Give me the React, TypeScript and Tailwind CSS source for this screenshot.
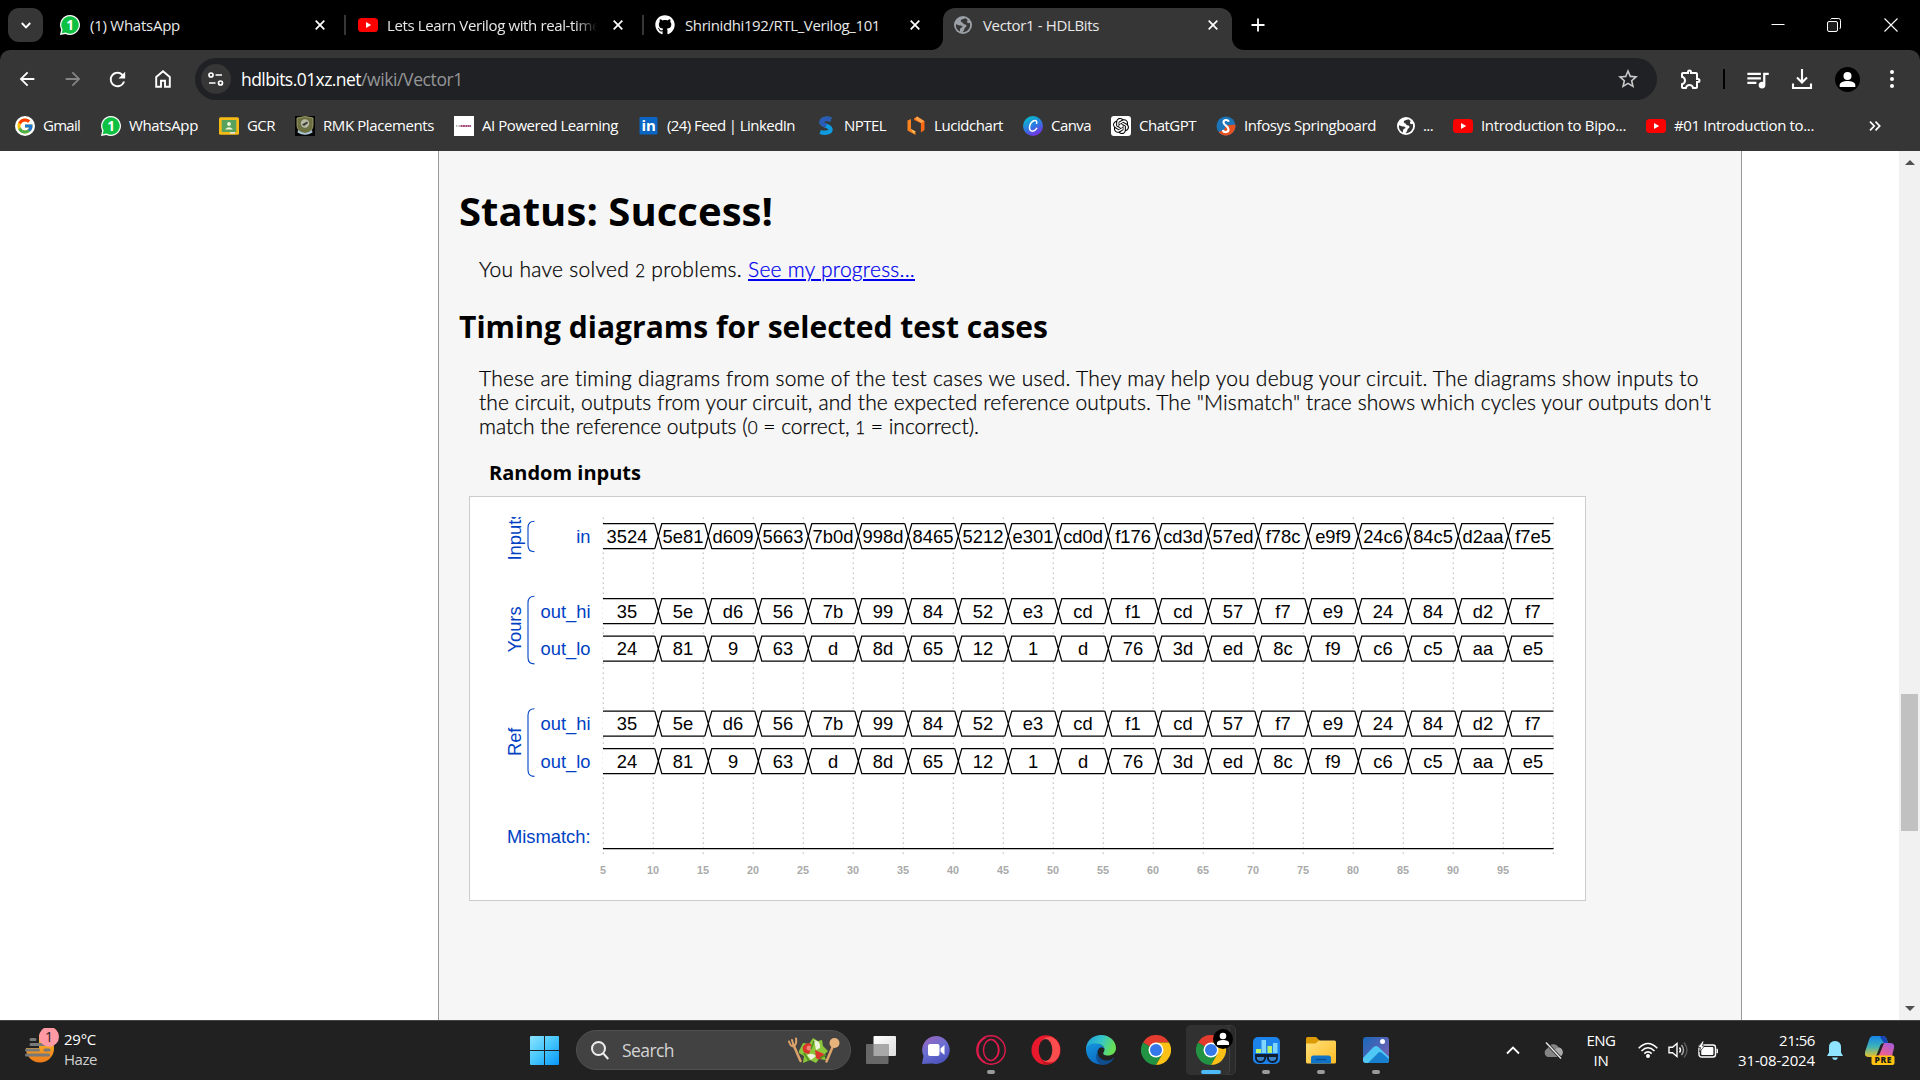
import React, { useLayoutEffect, useRef, useState } from "react";
import { FcGoogle } from "react-icons/fc";
import { FaGithub } from "react-icons/fa";
import { SiOpenai } from "react-icons/si";
import { MdArrowBack, MdArrowForward, MdOutlineExtension, MdQueueMusic, MdRefresh, MdStarOutline } from "react-icons/md";

/* Tracks a single line of text so that it fills a given width. */
function Fit({ w, className = "", children }: { w: number; className?: string; children: React.ReactNode }) {
  const ref = useRef<HTMLSpanElement>(null);
  const [ls, setLs] = useState(0);
  useLayoutEffect(() => {
    const el = ref.current;
    if (!el) return;
    const natural = el.getBoundingClientRect().width;
    const n = (el.textContent || "").length;
    setLs((w - natural) / n);
  }, [w]);
  return (
    <span className={`block shrink-0 whitespace-nowrap ${className}`} style={{ width: w }}>
      <span ref={ref} className="inline-block" style={{ letterSpacing: ls }}>{children}</span>
    </span>
  );
}

const WhatsAppBadge = () => (
  <svg viewBox="0 0 20 20" className="size-5 shrink-0">
    <path d="M10 0A10 10 0 1 1 5.4 18.9L0 20 1.2 14.700A10 10 0 0 1 10 0Z" fill="#fff" />
    <path d="M10 1.300A8.700 8.700 0 1 1 5.600 17.500L1.700 18.300 2.600 14.500A8.700 8.700 0 0 1 10 1.300Z" fill="#0fc143" />
    <text x="10" y="15" textAnchor="middle" fontSize="13.500" fontWeight="700" fill="#fff" fontFamily="Open Sans, sans-serif">1</text>
  </svg>
);

const YouTube = () => (
  <svg viewBox="0 0 20 20" className="size-5 shrink-0">
    <rect y="3" width="20" height="14" rx="3.500" fill="#f00" />
    <path d="M8 7v6l5.200-3Z" fill="#fff" />
  </svg>
);

const Globe = ({ land, sea }: { land: string; sea: string }) => (
  <svg viewBox="0 0 18 18" className="size-[18px] shrink-0">
    <circle cx="9" cy="9" r="9" fill={land} />
    <path d="M11.500 2.200C9.600 3.200 7 2.900 6.800 4.700 6.700 6.600 9 6 9.300 7.500c.3 1.400 2.800.4 3.200 2.100.3 1.800-1.700 1.600-2 3-.2 1.400-1 3.200-2.200 3.500A7.200 7.200 0 0 0 15.400 12c.8-1.500.9-3.800.3-5.200-.9.9-2.400.5-2.600-.7-.2-1 .8-1.500.4-2.300ZM2 8.200c-.5 3.300 1.300 6.100 3.900 7.300.2-1.500-.2-2.300.6-3.300.5-.8 2-.4 2-1.500 0-1-1.600-1.300-2.700-1.300C4.300 9.400 3.500 8.300 2 8.200Z" fill={sea} />
  </svg>
);

const ShieldCrest = () => (
  <svg viewBox="0 0 20 20" className="size-5 shrink-0">
    <rect width="20" height="20" fill="#050505" />
    <path d="M2 2q8-3 16 0v7c0 5-4 8-8 9-4-1-8-4-8-9Z" fill="#6d7040" stroke="#a9a878" strokeWidth=".8" />
    <circle cx="10" cy="7.500" r="4.200" fill="#b8b8a8" /><path d="M7 8.500 12 5.500l1 1.500-4 3Z" fill="#3c3d33" />
    <path d="M3 14q7 6 14 0l.5 2.500Q10 21 2.500 16.500Z" fill="#a9c3d6" />
  </svg>
);

const Classroom = () => (
  <svg viewBox="0 0 20 20" className="size-5 shrink-0">
    <rect y="1.200" width="20" height="17.600" rx="1.500" fill="#f5ba15" />
    <rect x="2.700" y="4" width="14.600" height="12" fill="#57a35d" />
    <circle cx="10" cy="8" r="1.900" fill="#f3f6d8" /><path d="M6 13.500q4-4.500 8 0Z" fill="#f3f6d8" />
    <path d="M11 16h5v1.800h-5Z" fill="#e8e0c8" />
  </svg>
);

const LearningLogo = () => (
  <svg viewBox="0 0 20 20" className="size-5 shrink-0">
    <rect width="20" height="20" fill="#fff" />
    <path d="M2 10h4" stroke="#777" strokeWidth="1" strokeDasharray="1 .5" /><path d="M6.500 10H17" stroke="#a3477c" strokeWidth="2" strokeDasharray="2 .4" />
  </svg>
);

const LinkedIn = () => (
  <svg viewBox="0 0 20 20" className="size-5 shrink-0">
    <rect x=".5" y="1" width="18" height="17.500" rx="1" fill="#0a66c2" />
    <text x="9.700" y="15.300" textAnchor="middle" fontSize="15" fontWeight="700" fill="#fff" fontFamily="Open Sans, sans-serif">in</text>
  </svg>
);

const Swayam = () => (
  <svg viewBox="0 0 20 20" className="size-5 shrink-0" fill="none">
    <path d="M15 3.500C9.500 1.800 5.500 3.500 5.700 6.500c.4 3.300 8.500 3 8.800 6.700.2 3.200-5 4.500-10.300 2.800" stroke="#0f9be0" strokeWidth="4.400" />
    <path d="M15 3.500C9.500 1.800 5.500 3.500 5.700 6.500c.2 1.700 2.300 2.300 4.600 3" stroke="#2b5bb5" strokeWidth="4.400" />
  </svg>
);

const Lucid = () => (
  <svg viewBox="0 0 20 20" className="size-5 shrink-0">
    <path d="M1.500 4.500 5 3v10l4.500 2.500V19L1.500 14.500Z" fill="#f9811e" /><path d="M5 13l4.500 2.500-2 2Z" fill="#ffc05c" />
    <path d="M8 2.500 11 .5l7.500 4.700V14l-3.600 2.500V7L8 4Z" fill="#f96b13" /><path d="M11 .5l7.500 4.700-3.600 1.800L9 3Z" fill="#ffa24a" />
  </svg>
);

const Canva = () => (
  <svg viewBox="0 0 20 20" className="size-5 shrink-0">
    <defs><linearGradient id="canva" x1=".2" y1="0" x2=".7" y2="1"><stop stopColor="#00c4cc" /><stop offset=".5" stopColor="#2b7de0" /><stop offset="1" stopColor="#7d2ae8" /></linearGradient></defs>
    <circle cx="10" cy="10" r="10" fill="url(#canva)" />
    <path d="M13.600 7.300c.6-1.800-.4-3-2-2.700C8.800 5 6.500 8.300 6.500 11.500c0 2.500 1.200 3.800 3 3.700 1.800-.1 3.200-1.200 4.200-2.800" fill="none" stroke="#fff" strokeWidth="1.500" strokeLinecap="round" />
  </svg>
);

const Infosys = () => (
  <svg viewBox="0 0 20 20" className="size-5 shrink-0">
    <circle cx="10" cy="10" r="9.500" fill="#1c75b8" />
    <path d="M10 9.500 19.300 8.500A9.500 9.500 0 0 1 2.500 15.900L8 14Z" fill="#e8501f" />
    <path d="M12.700 5.800C12.200 3.300 7.500 3.300 7.500 6.300c0 3.200 5 3.700 5 7.200 0 3.300-5.200 3.400-5.500.3" fill="none" stroke="#fff" strokeWidth="2.200" />
  </svg>
);

const ChatGpt = () => (
  <span className="flex size-5 shrink-0 items-center justify-center rounded-[3px] bg-white text-black"><SiOpenai size={16} /></span>
);

const Close = () => (
  <svg viewBox="0 0 10 10" className="size-[10px] shrink-0"><path d="M.7.7 9.300 9.300M9.300.7.7 9.300" stroke="#fff" strokeWidth="1.700" /></svg>
);

const ChromeLogo = () => (
  <svg viewBox="0 0 30 30" className="size-[30px]">
    <path d="M15 15 2 7.500A15 15 0 0 1 28 7.500H15Z" fill="#e33b2e" />
    <path d="M15 15 2 7.500A15 15 0 0 0 15 30L21.500 18.800Z" fill="#229342" />
    <path d="M15 7.500H28A15 15 0 0 1 15 30L21.500 18.700Z" fill="#fbc116" />
    <circle cx="15" cy="15" r="7.500" fill="#fff" /><circle cx="15" cy="15" r="6" fill="#3478ea" />
  </svg>
);

const bookmarks: { icon: React.ReactNode; label: string; w: number; next: number }[] = [
  { icon: <FcGoogle size={20} className="shrink-0 rounded-full bg-white p-[1px]" />, label: "Gmail", w: 37, next: 21 },
  { icon: <WhatsAppBadge />, label: "WhatsApp", w: 69, next: 21 },
  { icon: <Classroom />, label: "GCR", w: 28, next: 20 },
  { icon: <ShieldCrest />, label: "RMK Placements", w: 111, next: 20 },
  { icon: <LearningLogo />, label: "AI Powered Learning", w: 136, next: 21 },
  { icon: <LinkedIn />, label: "(24) Feed | LinkedIn", w: 128, next: 21 },
  { icon: <Swayam />, label: "NPTEL", w: 42, next: 20 },
  { icon: <Lucid />, label: "Lucidchart", w: 69, next: 20 },
  { icon: <Canva />, label: "Canva", w: 40, next: 20 },
  { icon: <ChatGpt />, label: "ChatGPT", w: 57, next: 20 },
  { icon: <Infosys />, label: "Infosys Springboard", w: 132, next: 21 },
  { icon: <Globe land="#fff" sea="#363636" />, label: "...", w: 10, next: 20 },
  { icon: <YouTube />, label: "Introduction to Bipo...", w: 145, next: 20 },
  { icon: <YouTube />, label: "#01 Introduction to...", w: 140, next: 0 },
];

function TabStrip() {
  return (
    <div className="flex h-[50px] items-center bg-black pl-2 text-[15px] text-[#e8e8e8]">
      <div className="flex h-[34px] w-[35px] items-center justify-center rounded-[11px] bg-[#363636]">
        <svg viewBox="0 0 10 7" className="h-[7px] w-[10px]"><path d="M.8 1 5 5.300 9.200 1" fill="none" stroke="#fff" strokeWidth="1.900" /></svg>
      </div>
      <div className="flex w-[301px] items-center pl-[17px]">
        <WhatsAppBadge />
        <Fit w={90} className="ml-[10px]">(1) WhatsApp</Fit>
        <span className="ml-auto pr-[19px]"><Close /></span>
      </div>
      <div className="h-5 w-[2px] bg-[#363636]" />
      <div className="flex w-[296px] items-center pl-3">
        <YouTube />
        <div className="ml-[9px] w-[210px] overflow-hidden [mask-image:linear-gradient(to_right,black_188px,transparent)]"><Fit w={213}>Lets Learn Verilog with real-time</Fit></div>
        <span className="ml-auto pr-[19px]"><Close /></span>
      </div>
      <div className="h-5 w-[2px] bg-[#363636]" />
      <div className="flex w-[287px] items-center pl-[11px]">
        <FaGithub size={20} className="text-white" />
        <Fit w={195} className="ml-[10px]">Shrinidhi192/RTL_Verilog_101</Fit>
        <span className="ml-auto pr-[11px]"><Close /></span>
      </div>
      <div className="flex h-[50px] items-end">
        <div className="h-3 w-3 bg-[radial-gradient(circle_at_0_0,#000_11.5px,#363636_12.5px)]" />
        <div className="flex h-[42px] w-[289px] items-center rounded-t-[12px] bg-[#363636] pb-2 pl-[11px]">
          <Globe land="#9aa0a6" sea="#363636" />
          <Fit w={116} className="ml-[11px]">Vector1 - HDLBits</Fit>
          <span className="ml-auto pr-[14px]"><Close /></span>
        </div>
        <div className="h-3 w-3 bg-[radial-gradient(circle_at_100%_0,#000_11.5px,#363636_12.5px)]" />
      </div>
      <svg viewBox="0 0 14 14" className="ml-[7px] size-[14px]"><path d="M7 .5v13M.5 7h13" stroke="#fff" strokeWidth="1.800" /></svg>
      <div className="ml-auto flex items-center pr-[22px]">
        <svg viewBox="0 0 14 14" className="size-[14px]"><path d="M.5 6.500h13" stroke="#fff" /></svg>
        <svg viewBox="0 0 14 14" className="ml-[42px] size-[14px]" fill="none" stroke="#fff"><rect x=".5" y="3.500" width="10" height="10" rx="1.500" fill="#1c1c1c" /><path d="M3.500 1.500Q4 .5 5 .5h6.500q2 0 2 2V9q0 1.500-1 2" /></svg>
        <svg viewBox="0 0 14 14" className="ml-[43px] size-[14px]"><path d="M.5.5l13 13M13.500.5l-13 13" stroke="#fff" strokeWidth="1.100" /></svg>
      </div>
    </div>
  );
}

function Toolbar() {
  return (
    <div className="bg-black">
      <div className="h-[101px] rounded-t-[10px] bg-[#363636]">
        <div className="flex h-[58px] items-center pl-4 text-white">
          <MdArrowBack size={22} />
          <MdArrowForward size={22} className="ml-6 text-[#858585]" />
          <MdRefresh size={23} className="ml-[22px]" />
          <svg viewBox="0 0 16 20" className="ml-[26px] h-5 w-4" fill="none" stroke="currentColor" strokeWidth="1.900"><path d="M1.200 8 8 2.200 14.800 8v9.800H10v-6H6v6H1.200Z" /></svg>
          <div className="ml-[24px] flex h-[42px] w-[1462px] items-center rounded-full bg-[#202124] pl-[6px]">
            <div className="flex size-[30px] items-center justify-center rounded-full bg-[#363636]">
              <svg viewBox="0 0 16 14" className="h-[14px] w-4" fill="none" stroke="#fff" strokeWidth="1.700"><circle cx="3" cy="3" r="2" /><path d="M7.500 3H14M1 11h6.500" /><circle cx="12.500" cy="11" r="2" /></svg>
            </div>
            <div className="ml-[10px] flex text-[17.500px]">
              <Fit w={120}>hdlbits.01xz.net</Fit>
              <Fit w={102} className="text-[#959698]">/wiki/Vector1</Fit>
            </div>
            <MdStarOutline size={24} className="mr-[17px] ml-auto text-[#c8c8c8]" />
          </div>
          <MdOutlineExtension size={24} className="ml-[22px]" />
          <div className="ml-[20px] h-5 w-[2px] bg-black" />
          <MdQueueMusic size={27} className="ml-[19px]" />
          <svg viewBox="0 0 22 22" className="ml-[20px] size-[22px]" fill="none" stroke="currentColor" strokeWidth="2.100"><path d="M11 1V14.500M6 9.500l5 5 5-5M2 15.500V20h18v-4.500" /></svg>
          <svg viewBox="0 0 25 25" className="ml-[22px] size-[25px]"><circle cx="12.500" cy="12.500" r="12.500" fill="#000" /><circle cx="12.500" cy="9" r="4" fill="#fff" /><path d="M4.700 20v-2c0-2.700 4.300-4 7.800-4s7.800 1.300 7.800 4v2Z" fill="#fff" /></svg>
          <svg viewBox="0 0 4 18" className="ml-[30px] h-[18px] w-1" fill="#fff"><circle cx="2" cy="2" r="2" /><circle cx="2" cy="9" r="2" /><circle cx="2" cy="16" r="2" /></svg>
        </div>
        <div className="flex h-[36px] items-center pl-[15px] text-[15px] text-white">
          {bookmarks.map((b, i) => (
            <div key={i} className="flex items-center">
              {b.icon}
              <Fit w={b.w} className="ml-2 pb-[2px]">{b.label}</Fit>
              <span className="block" style={{ width: b.next }} />
            </div>
          ))}
          <svg viewBox="0 0 12 10" className="mr-[39px] ml-auto h-[10px] w-3"><path d="M1 .7 5.200 5 1 9.300M6.500.7 10.700 5 6.500 9.300" fill="none" stroke="#fff" strokeWidth="1.700" /></svg>
        </div>
      </div>
    </div>
  );
}

const words = ["3524", "5e81", "d609", "5663", "7b0d", "998d", "8465", "5212", "e301", "cd0d", "f176", "cd3d", "57ed", "f78c", "e9f9", "24c6", "84c5", "d2aa", "f7e5"];
const hi = words.map((w) => w.slice(0, 2));
const lo = words.map((w) => w.slice(2).replace(/^0/, ""));

/* Wave coordinates are relative to the chart frame: the first cycle starts at x = 133. */
function Bus({ y, name, values }: { y: number; name: string; values: string[] }) {
  return (
    <g>
      <rect x="133" y={y} width="950.500" height="25" fill="#fff" />
      {values.map((v, i) => {
        const l = i === 0 ? 133 : 138.300 + 50 * i;
        const r = 188.300 + 50 * i;
        const last = i === values.length - 1;
        const top = i === 0 ? `M133 ${y}` : `M${l - 3.500} ${y + 25}L${l + 3.500} ${y}`;
        const bot = i === 0 ? `M133 ${y + 25}` : `M${l - 3.500} ${y}L${l + 3.500} ${y + 25}`;
        const end = last ? 1083.500 : r - 3.500;
        return (
          <g key={i}>
            <path d={`${top}H${end}${bot}H${end}`} fill="none" stroke="#000" strokeWidth="1.250" />
            <text x={i === 0 ? 157 : 163 + 50 * i} y={y + 19.200} textAnchor="middle">{v}</text>
          </g>
        );
      })}
      <text x="120.500" y={y + 19.200} textAnchor="end" fill="#0041c4">{name}</text>
    </g>
  );
}

function Timing() {
  return (
    <svg viewBox="0 0 1115 403" className="block h-[403px] w-[1115px] font-['Liberation_Sans',Arial,sans-serif]" fontSize="18.330">
      {Array.from({ length: 20 }, (_, i) => (
        <path key={i} d={`M${133.300 + 50 * i} 20.500V357`} stroke="#b5b5b5" strokeWidth="1.250" strokeDasharray="1.250 3.750" />
      ))}
      <Bus y={26.600} name="in" values={words} />
      <Bus y={101.600} name="out_hi" values={hi} />
      <Bus y={139.100} name="out_lo" values={lo} />
      <Bus y={214.100} name="out_hi" values={hi} />
      <Bus y={251.600} name="out_lo" values={lo} />
      <text x="120.500" y="346" textAnchor="end" fill="#0041c4">Mismatch:</text>
      <path d="M133 351.600H1083.500" stroke="#000" strokeWidth="1.400" />
      <g fill="none" stroke="#0041c4" strokeWidth="1.100">
        <path d="M64.500 24.300q-6.500 0-6.500 6.500v17.400q0 6.500 6.500 6.500" />
        <path d="M64.500 99.300q-6.500 0-6.500 6.500v54.600q0 6.500 6.500 6.500" />
        <path d="M64.500 211.800q-6.500 0-6.500 6.500v54.600q0 6.500 6.500 6.500" />
      </g>
      <clipPath id="frame"><rect x="0" y="20" width="1115" height="383" /></clipPath>
      <g fill="#0041c4" textAnchor="middle" clipPath="url(#frame)">
        <text transform="translate(51 38.500) rotate(-90)">Inputs</text>
        <text transform="translate(51 132.500) rotate(-90)">Yours</text>
        <text transform="translate(51 244.800) rotate(-90)">Ref</text>
      </g>
      <g fill="#aaa" fontSize="10.800" fontWeight="700" textAnchor="middle">
        {Array.from({ length: 19 }, (_, i) => <text key={i} x={133 + 50 * i} y="377">{5 + 5 * i}</text>)}
      </g>
    </svg>
  );
}

function Page() {
  return (
    <div className="flex h-[869px] bg-white">
      <main className="ml-[438px] w-[1304px] border-x border-[#999] bg-[#f6f6f6] pt-[36px] pl-5 text-black">
        <h1 className="h-12 text-[40px] leading-[48px] font-bold"><Fit w={314}>Status: Success!</Fit></h1>
        <div className="mt-[22px] ml-5 flex h-6 font-['Lato','Open_Sans',sans-serif] text-[21px] leading-6 font-light [-webkit-text-stroke:0.25px]">
          <Fit w={269}>You have solved <span className="text-[17px] leading-none">2</span> problems.&nbsp;</Fit>
          <a className="text-[#0000ee]"><Fit w={167} className="[&>span]:underline">See my progress...</Fit></a>
        </div>
        <h2 className="mt-[28px] h-9 text-[30px] leading-9 font-bold"><Fit w={589}>Timing diagrams for selected test cases</Fit></h2>
        <div className="mt-[21px] ml-5 h-[72px] font-['Lato','Open_Sans',sans-serif] text-[21px] leading-6 font-light [-webkit-text-stroke:0.25px]">
          <Fit w={1220} className="h-6">These are timing diagrams from some of the test cases we used. They may help you debug your circuit. The diagrams show inputs to</Fit>
          <Fit w={1232} className="h-6">the circuit, outputs from your circuit, and the expected reference outputs. The "Mismatch" trace shows which cycles your outputs don't</Fit>
          <Fit w={500} className="h-6">match the reference outputs (<span className="text-[17px] leading-none">0</span> = correct, <span className="text-[17px] leading-none">1</span> = incorrect).</Fit>
        </div>
        <h3 className="mt-[23px] ml-[30px] h-6 text-[20px] leading-6 font-bold"><Fit w={152}>Random inputs</Fit></h3>
        <div className="mt-[11px] ml-[10px] h-[405px] w-[1117px] border border-[#ccc] bg-white"><Timing /></div>
      </main>
      <div className="ml-auto flex w-[21px] flex-col items-center bg-[#f1f1f1] py-[9px]">
        <svg viewBox="0 0 10 5" className="h-[5px] w-[10px]"><path d="M0 5 5 0l5 5Z" fill="#505050" /></svg>
        <div className="mt-[529px] h-[137px] w-[17px] bg-[#c1c1c1]" />
        <svg viewBox="0 0 10 5" className="mt-auto h-[5px] w-[10px]"><path d="M0 0l5 5 5-5Z" fill="#505050" /></svg>
      </div>
    </div>
  );
}

function TaskIcon({ children, open }: { children: React.ReactNode; open?: boolean }) {
  return (
    <div className="relative flex h-[60px] w-[55px] items-center justify-center">
      {children}
      {open && <span className="absolute bottom-[6px] left-[23.500px] h-1 w-2 rounded-full bg-[#9a9a9a]" />}
    </div>
  );
}

function Taskbar() {
  return (
    <div className="flex h-[60px] items-center bg-[#212121] text-[15px] text-white shadow-[inset_0_1px_0_#454545]">
      <div className="flex w-[517px] items-center pl-[25px]">
        <svg viewBox="0 0 34 44" className="h-11 w-[34px]">
          <defs><linearGradient id="sun" x2="0" y2="1"><stop stopColor="#f9c22b" /><stop offset="1" stopColor="#ee7a1b" /></linearGradient></defs>
          <circle cx="15" cy="20.500" r="14" fill="url(#sun)" />
          <path d="M0 5H14V20H0Z" fill="#212121" />
          <path d="M6 11.500h4M6 16.500h20M1.500 22h12M20 22h4M1.500 27h22" stroke="#77797b" strokeWidth="3" strokeLinecap="round" />
          <circle cx="24" cy="8.800" r="10" fill="#ff99a4" />
          <text x="24" y="13.800" textAnchor="middle" fontSize="14" fill="#222" fontFamily="Open Sans">1</text>
        </svg>
        <div className="ml-[5px] pb-[2px] leading-5">
          <Fit w={32}>29°C</Fit>
          <Fit w={33} className="text-[#d0d0d0]">Haze</Fit>
        </div>
      </div>
      <TaskIcon>
        <svg viewBox="0 0 29 29" className="size-[29px]"><defs><linearGradient id="win" x2="1" y2="1"><stop stopColor="#8be3ff" /><stop offset=".5" stopColor="#45c6fb" /><stop offset="1" stopColor="#0795fb" /></linearGradient></defs><path d="M1 0h13v14H0V1Q0 0 1 0ZM15 0h13q1 0 1 1v13H15ZM0 15h14v14H1q-1 0-1-1ZM15 15h14v13q0 1-1 1H15Z" fill="url(#win)" /></svg>
      </TaskIcon>
      <div className="ml-1 flex h-10 w-[275px] items-center rounded-full border border-[#505050] bg-[#424242] pl-[14px]">
        <svg viewBox="0 0 18 19" className="h-[19px] w-[18px]" fill="none" stroke="#eee" strokeWidth="2"><circle cx="7.500" cy="7.500" r="6.500" fill="#5c5c5c" /><path d="m12.300 12.500 5 5.500" /></svg>
        <Fit w={52} className="ml-[13px] text-[17.500px] leading-6 text-[#d4d4d4]">Search</Fit>
        <svg viewBox="0 0 52 27" className="mr-[10px] ml-auto h-[27px] w-[52px]">
          <g stroke="#dca46b" strokeLinecap="round" fill="none"><path d="m5.500 8 7 16" strokeWidth="2.500" /><path d="M1 4.500Q3 10.500 6 9q3-2 2-7.500M4 3l1.500 5" strokeWidth="2" /><path d="m45 9-6.500 15.500" strokeWidth="2.500" /></g>
          <circle cx="46.500" cy="6" r="5" fill="#e8b27c" />
          <path d="m11 14 4-8 6 1 4-6 5 3 4-1 1 6 5 5-4 4 2 5-7-1-3 4-6-3-7 3 1-7-5-3Z" fill="#8cc63a" />
          <path d="M15 9q7-6 9 0l-3 8q-8-1-6-8ZM27 13l9 4q-2 8-8 4Z" fill="#d9352b" /><circle cx="21" cy="11" r="2.500" fill="#f28372" />
          <path d="M26 3q7 1 6 8l-4 2ZM19 18q5-3 9 1l-5 4Z" fill="#eef3dc" /><path d="m16 16 5 8m5-20-3 8m9 9 6-3" stroke="#4d931e" strokeWidth="1.500" />
        </svg>
      </div>
      <div className="ml-[2.500px] flex">
        <TaskIcon><svg viewBox="0 0 30 28" className="h-7 w-[30px]"><defs><linearGradient id="tv" x2="1" y2="1"><stop stopColor="#fff" /><stop offset="1" stopColor="#ddd" /></linearGradient></defs><rect x="7.500" width="22.500" height="20" rx="1" fill="url(#tv)" /><rect y="8" width="22.500" height="20" rx="1" fill="#686868" /><path d="M7.500 8h15v12h-15Z" fill="#a8a8a8" /></svg></TaskIcon>
        <TaskIcon><svg viewBox="0 0 30 30" className="size-[30px]"><defs><linearGradient id="chat" x1=".1" y1="0" x2=".6" y2="1"><stop stopColor="#9d63bb" /><stop offset=".5" stopColor="#6b6fd3" /><stop offset="1" stopColor="#4b53bc" /></linearGradient></defs><path d="M15 1A14 14 0 1 1 11 28.500L1 29 2.500 21A14 14 0 0 1 15 1Z" fill="url(#chat)" /><rect x="7" y="9" width="11.500" height="12" rx="2" fill="#fff" /><path d="m19.500 13.500 4-3.500v10l-4-3.500Z" fill="#fff" /></svg></TaskIcon>
        <TaskIcon open><svg viewBox="0 0 30 30" className="size-[30px]" fill="none" stroke="#e21b4d" strokeWidth="1.400"><circle cx="15" cy="15" r="14.200" /><ellipse cx="15" cy="15" rx="7.500" ry="10.500" /><path d="M9.500 2.500a14 14 0 0 0 0 25" /><path d="M18 6q5 3 5 9t-5 9" /></svg></TaskIcon>
        <TaskIcon><svg viewBox="0 0 30 30" className="size-[30px]"><ellipse cx="15" cy="15" rx="14.500" ry="14.800" fill="#e8192c" /><path d="M11 5Q18-1 24 4a14.500 14.500 0 0 1 0 22q-6 5-13-1Z" fill="#fb4d4d" /><path d="M10 24q6 6 14 2-5 4-11 3.500Z" fill="#c2121f" /><ellipse cx="14.500" cy="15" rx="6.800" ry="11" fill="#212121" /></svg></TaskIcon>
        <TaskIcon><svg viewBox="0 0 30 30" className="size-[30px]"><defs><linearGradient id="edge" x2="1" y2=".3"><stop stopColor="#1e9be0" /><stop offset=".55" stopColor="#35c6c8" /><stop offset="1" stopColor="#67df55" /></linearGradient><linearGradient id="edge2" x2=".5" y2="1"><stop stopColor="#1596dc" /><stop offset="1" stopColor="#0a69c3" /></linearGradient></defs><path d="M0 13C1 5 7.500 0 15 0c9 0 15 6.500 15 13 0 5-4 7.500-8 7.500-4 0-5.500-1.500-4.500-3 .6-1 1-2 1-3 0-3-3-5.500-7-5.500C5 9 1 11.500 0 16Z" fill="url(#edge)" /><path d="M0 15.500C0 10 4.500 8 10.500 8.500c4.500.4 8 3 8 6-1-2.500-4-3-6-.5-3 4 1 13 10 13.500A15 15 0 0 1 0 15.500Z" fill="url(#edge2)" /><path d="M12.500 14c-3 6 2 12 9 11.500 3-.2 5-1.500 6.500-3-1 4-6 7.500-12 7.500-5-1.500-8-8-3.500-16Z" fill="#104d8f" /></svg></TaskIcon>
        <TaskIcon><ChromeLogo /></TaskIcon>
        <TaskIcon>
          <div className="absolute top-[5px] left-[2.500px] h-[50px] w-[50px] rounded-[5px] border border-[#393939] bg-[#2b2b2b]" />
          <div className="absolute top-[5px] left-[2.500px] h-[50px] w-[44px] rounded-[5px] border-r border-[#414141] bg-[#313131]" />
          <div className="relative"><ChromeLogo /></div>
          <svg viewBox="0 0 20 20" className="absolute top-[9px] left-[29px] size-5"><circle cx="10" cy="10" r="10" fill="#000" /><circle cx="10" cy="7" r="3.300" fill="#fff" /><path d="M4 16v-2c0-2 3-3 6-3s6 1 6 3v2Z" fill="#fff" /></svg>
          <span className="absolute bottom-[6px] left-[17.500px] h-1 w-5 rounded-full bg-[#4cb9f8]" />
        </TaskIcon>
        <TaskIcon open><svg viewBox="0 0 27 27" className="size-[27px]"><rect width="27" height="27" rx="5" fill="#1d83ec" /><path d="M3 12h5v4H3Z" fill="#b7f36a" /><path d="M8.500 3H13v13H8.500ZM20 6h4.500v10H20Z" fill="#7fd5fb" /><path d="M14.500 9H19v7h-4.500Z" fill="#b7f36a" /><path d="M2 18h23M3 19h9v3q-1 3-4.500 3T3 22ZM15 19h9v3q-1 3-4.500 3T15 22ZM12 20q1.500-1.500 3 0" fill="#3a83c9" stroke="#101d2e" strokeWidth="1.800" /></svg></TaskIcon>
        <TaskIcon open><svg viewBox="0 0 30 27" className="h-[27px] w-[30px]"><defs><linearGradient id="fold" x2="1" y2="1"><stop stopColor="#ffe07a" /><stop offset="1" stopColor="#fdbc25" /></linearGradient></defs><path d="M0 1.500Q0 0 1.500 0H10l3.500 3.500V10H0Z" fill="#dc9a05" /><path d="M0 6.500h9.500l3.500-3h15.500Q30 3.500 30 5v20q0 1.500-1.500 1.500h-27Q0 26.500 0 25Z" fill="url(#fold)" /><path d="M5 26.500V21q0-2.500 2.500-2.500h15q2.500 0 2.500 2.500v5.500Z" fill="#0f74c8" /><path d="M10 22.500h10" stroke="#0a4e92" strokeWidth="1.400" /></svg></TaskIcon>
        <TaskIcon open><svg viewBox="0 0 26 26" className="size-[26px]"><defs><linearGradient id="ph" x2="1" y2=".8"><stop stopColor="#1767b8" /><stop offset="1" stopColor="#7a62b5" /></linearGradient><clipPath id="phc"><rect width="26" height="26" rx="3" /></clipPath></defs><g clipPath="url(#phc)"><rect width="26" height="26" fill="url(#ph)" /><path d="M0 21 10 10.500q3-3 6 0L26 20v6H0Z" fill="#50c8f5" /><path d="m5 26 10-10q2-2 4 0l7 6v4Z" fill="#1980cf" /></g><circle cx="19.500" cy="4.500" r="2.500" fill="#fff" /></svg></TaskIcon>
      </div>
      <div className="ml-auto flex items-center pr-[25px]">
        <svg viewBox="0 0 14 9" className="h-[9px] w-[14px]"><path d="m1 7.500 6-6 6 6" fill="none" stroke="#fff" strokeWidth="1.800" /></svg>
        <svg viewBox="0 0 20 17" className="ml-[23px] h-[17px] w-5"><path d="M5 15a4.500 4.500 0 0 1-.5-8.500 6 6 0 0 1 11-1A4.800 4.800 0 0 1 15.500 15Z" fill="#858585" /><path d="M9 9 15.500 5.500A4.800 4.800 0 0 1 18 14Z" fill="#a9a9a9" /><path d="m3 .5 15 16" stroke="#212121" strokeWidth="3" /><path d="m3 .5 15 16" stroke="#eee" strokeWidth="1.300" /></svg>
        <div className="ml-[23px] flex w-[30px] flex-col items-center leading-5"><Fit w={29}>ENG</Fit><Fit w={15}>IN</Fit></div>
        <svg viewBox="0 0 20 16" className="ml-[22px] h-4 w-5" fill="none" stroke="#fff" strokeWidth="1.600"><path d="M.7 6.200q9.300-9.500 18.600 0M3.500 9q6.500-6.500 13 0M6.300 11.700q3.700-3.500 7.400 0" /><circle cx="10" cy="14" r="1.200" fill="#fff" /></svg>
        <svg viewBox="0 0 20 18" className="ml-[10px] h-[18px] w-5" fill="none" stroke="#fff" strokeWidth="1.400"><path d="M1 6.200h3.500L9 2.500v13l-4.500-3.700H1Z" /><path d="M11.500 6.500q2 2.500 0 5" /><path d="M13.500 4q4 5 0 10" stroke="#aaa" /><path d="M16 1.500q6 7.500 0 15" stroke="#5a5a5a" /></svg>
        <svg viewBox="0 0 20 18" className="ml-[10px] h-[18px] w-5"><rect x="1" y="4" width="16.500" height="12" rx="2.500" fill="#212121" stroke="#fff" strokeWidth="1.400" /><rect x="3.200" y="6" width="12.200" height="8" rx="1" fill="#fff" /><path d="M18.700 8q1.500 2 0 4" stroke="#fff" strokeWidth="1.500" /><path d="M4.500 0 0 6.500h2.500l-1 4.500 5-6H4.500l1.500-5Z" fill="#fff" stroke="#212121" strokeWidth=".7" /></svg>
        <div className="ml-[20px] flex w-[77px] flex-col items-end pb-[1px] leading-5"><Fit w={36}>21:56</Fit><Fit w={77}>31-08-2024</Fit></div>
        <svg viewBox="0 0 16 19" className="ml-3 h-[19px] w-4" fill="#8fe5ff"><path d="M8 0q6 0 6 6.500v5l2 3.500H0l2-3.500v-5Q2 0 8 0ZM5 16.500h6Q10 19 8 19t-3-2.500Z" /></svg>
        <svg viewBox="0 0 30 29" className="ml-[22px] h-[29px] w-[30px]">
          <defs><linearGradient id="co1" x2="0" y2="1"><stop stopColor="#1484e8" /><stop offset=".5" stopColor="#3db2b8" /><stop offset="1" stopColor="#e9c229" /></linearGradient><linearGradient id="co2" x1="1" x2=".3" y2="1"><stop stopColor="#a05be0" /><stop offset="1" stopColor="#f3608a" /></linearGradient></defs>
          <path d="M8 0h10q3 0 4 4l1 3h-4q-3 0-4 3l-3 8q-1 3-4 3H4q-5 0-4-5L4 4Q5 0 8 0Z" fill="url(#co1)" /><path d="M16 0h2q3 0 4 4l1 3h-4L15 1Z" fill="#1846b4" /><path d="M19 7h6q5 0 4 5l-2 8H12q2 0 3-3Z" fill="url(#co2)" />
          <rect x="6.500" y="19.500" width="23" height="9.500" rx="2" fill="#fdc210" /><text x="18" y="27.300" textAnchor="middle" fontSize="8.500" fontWeight="800" fill="#1b1b1b" fontFamily="Open Sans" textLength="17">PRE</text>
        </svg>
      </div>
    </div>
  );
}

export default function App() {
  return (
    <div className="flex h-[1080px] w-[1920px] flex-col overflow-hidden bg-white font-['Open_Sans','Noto_Sans',sans-serif]">
      <TabStrip />
      <Toolbar />
      <Page />
      <Taskbar />
    </div>
  );
}
